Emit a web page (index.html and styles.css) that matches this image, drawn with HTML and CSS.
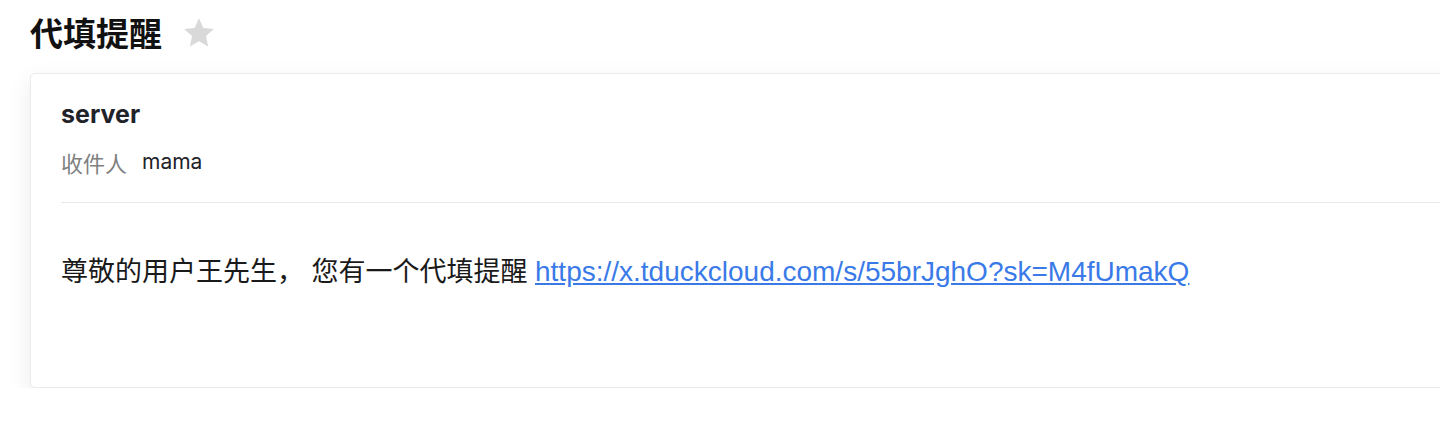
FILE: index.html
```html
<!DOCTYPE html>
<html lang="zh-CN">
<head>
<meta charset="utf-8">
<title>代填提醒</title>
<link rel="stylesheet" href="styles.css">
</head>
<body>
<div class="page">
  <div class="title-row">
    <h1 class="title">代填提醒</h1>
    <svg class="star" viewBox="0 0 24 24" width="34" height="34" aria-hidden="true">
      <path d="M12 1.6l3.1 6.9 7.4.7-5.6 5 1.6 7.4L12 17.8l-6.5 3.8 1.6-7.4-5.6-5 7.4-.7z" fill="#d9d9d9"/>
    </svg>
  </div>
  <div class="card">
    <div class="subject">server</div>
    <div class="meta"><span class="meta-label">收件人</span><span class="meta-value">mama</span></div>
    <div class="divider"></div>
    <div class="content">尊敬的用户王先生， 您有一个代填提醒 <a class="link" href="#">https://x.tduckcloud.com/s/55brJghO?sk=M4fUmakQ</a></div>
  </div>
</div>
</body>
</html>
```
FILE: styles.css
```css
html, body {
  margin: 0;
  padding: 0;
  background: #ffffff;
  overflow: hidden;
}
body {
  font-family: "Liberation Sans", "Noto Sans CJK SC", sans-serif;
  color: #1a1a1a;
}
.page {
  padding: 11px 0 0 30px;
}
.title-row {
  display: flex;
  align-items: center;
  height: 43px;
}
.title {
  margin: 0;
  font-family: "Noto Sans CJK SC", sans-serif;
  font-size: 33px;
  line-height: 43px;
  font-weight: 700;
  color: #111111;
}
.star {
  margin-left: 20px;
  display: block;
}
.card {
  margin-top: 19px;
  width: 1460px;
  box-sizing: border-box;
  border: 1px solid #eaeaea;
  border-radius: 5px;
  background: #ffffff;
  box-shadow: 0 8px 24px 0 rgba(0, 0, 0, 0.08);
  padding: 24px 30px 97px 30px;
}
.subject {
  font-family: Inter, "Noto Sans CJK SC", sans-serif;
  font-size: 25px;
  line-height: 32px;
  font-weight: 700;
  color: #1f2329;
}
.meta {
  margin-top: 18px;
  display: flex;
  align-items: center;
  gap: 15px;
  line-height: 28px;
}
.meta-label {
  font-family: "Noto Sans CJK SC", sans-serif;
  font-size: 22px;
  color: #7f7f7f;
}
.meta-value {
  font-family: Inter, sans-serif;
  font-size: 21px;
  color: #1f2329;
}
.divider {
  margin-top: 26px;
  border-top: 1px solid #e8e8e8;
}
.content {
  margin-top: 51px;
  font-family: "Liberation Sans", "Noto Sans CJK SC", sans-serif;
  font-size: 27px;
  line-height: 36px;
  color: #1a1a1a;
}
.link {
  font-size: 28px;
  color: #3a7ae8;
  text-decoration: underline;
}
```
